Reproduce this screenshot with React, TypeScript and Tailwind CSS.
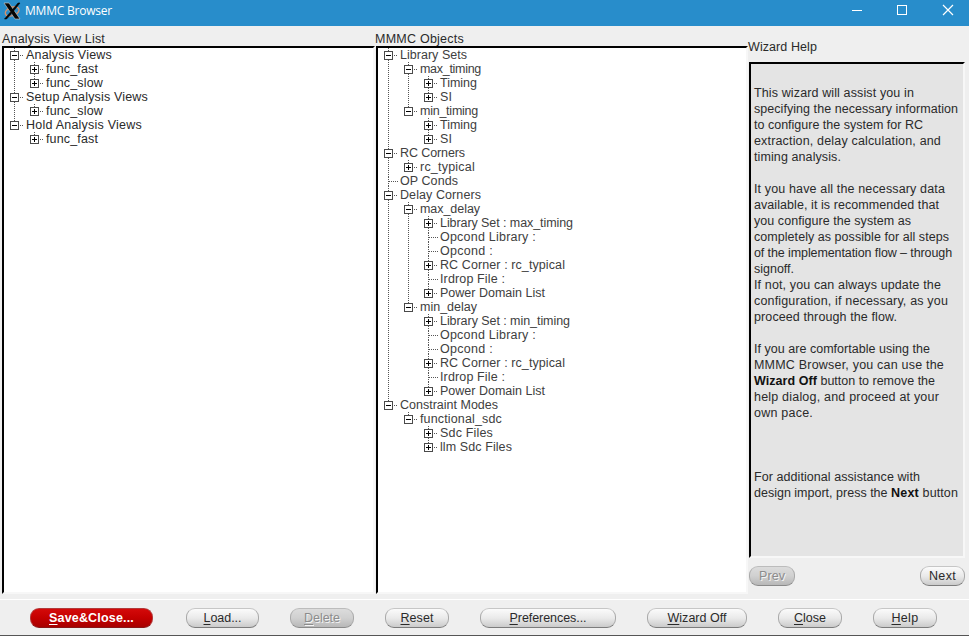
import { useLayoutEffect, useRef, type ReactNode } from "react";
import clsx from "clsx";

/** Text run tracked so that it fills exactly `w` pixels. */
function Run({ w, className, children }: { w: number; className?: string; children: ReactNode }) {
  const ref = useRef<HTMLSpanElement>(null);
  useLayoutEffect(() => {
    const el = ref.current;
    if (!el) return;
    el.style.letterSpacing = "0px";
    const natural = el.getBoundingClientRect().width;
    const count = (el.textContent ?? "").length;
    el.style.letterSpacing = `${(w - natural) / count}px`;
  }, [w]);
  return (
    <span ref={ref} className={clsx("inline-block whitespace-pre", className)}>
      {children}
    </span>
  );
}

type TreeNode = { label: string; w: number; kind?: "open" | "closed" | "leaf"; children?: TreeNode[] };

const analysis: TreeNode[] = [
  { label: "Analysis Views", w: 86, children: [{ label: "func_fast", w: 52 }, { label: "func_slow", w: 57 }] },
  { label: "Setup Analysis Views", w: 122, children: [{ label: "func_slow", w: 57 }] },
  { label: "Hold Analysis Views", w: 116, children: [{ label: "func_fast", w: 52 }] },
];

const timing: TreeNode[] = [{ label: "Timing", w: 37 }, { label: "SI", w: 12 }];

const delay = (set: string, w: number): TreeNode[] => [
  { label: `Library Set : ${set}`, w },
  { label: "Opcond Library :", w: 96, kind: "leaf" },
  { label: "Opcond :", w: 53, kind: "leaf" },
  { label: "RC Corner : rc_typical", w: 125 },
  { label: "Irdrop File :", w: 65, kind: "leaf" },
  { label: "Power Domain List", w: 105 },
];

const objects: TreeNode[] = [
  {
    label: "Library Sets",
    w: 67,
    children: [
      { label: "max_timing", w: 61, children: timing },
      { label: "min_timing", w: 58, children: timing },
    ],
  },
  { label: "RC Corners", w: 65, children: [{ label: "rc_typical", w: 55 }] },
  { label: "OP Conds", w: 58, kind: "leaf" },
  {
    label: "Delay Corners",
    w: 81,
    children: [
      { label: "max_delay", w: 60, children: delay("max_timing", 133) },
      { label: "min_delay", w: 57, children: delay("min_timing", 130) },
    ],
  },
  {
    label: "Constraint Modes",
    w: 98,
    children: [
      {
        label: "functional_sdc",
        w: 82,
        children: [{ label: "Sdc Files", w: 53 }, { label: "llm Sdc Files", w: 72 }],
      },
    ],
  },
];

const vDots = "w-px bg-[repeating-linear-gradient(to_bottom,#555_0_1px,transparent_1px_2px)]";
const hDots = "h-px bg-[repeating-linear-gradient(to_right,#555_0_1px,transparent_1px_2px)]";

function Toggle({ open }: { open: boolean }) {
  return (
    <svg width="9" height="9" viewBox="0 0 9 9" shapeRendering="crispEdges" className="block shrink-0">
      <rect x="0.5" y="0.5" width="8" height="8" fill="#fff" stroke="#4a4a4a" />
      <path d={open ? "M2 4.5H7" : "M2 4.5H7M4.5 2V7"} stroke="#000" />
    </svg>
  );
}

function Tree({ nodes, className }: { nodes: TreeNode[]; className?: string }) {
  return (
    <ul className={className}>
      {nodes.map((n, i) => {
        const leaf = n.kind === "leaf";
        const last = i === nodes.length - 1;
        return (
          <li key={i} className="flex">
            <div className="flex w-[9px] flex-col items-center">
              <div className={clsx(vDots, "h-[3px] shrink-0")} />
              {leaf ? (
                <div className={clsx(vDots, "h-[9px] shrink-0")} />
              ) : (
                <Toggle open={!!n.children} />
              )}
              {!last && <div className={clsx(vDots, "flex-1")} />}
            </div>
            <div>
              <div className="flex h-[14px] items-center leading-[14px]">
                <div className={clsx(hDots, "mt-px", leaf ? "-ml-[4px] mr-[2px] w-[9px]" : "ml-px mr-[2px] w-[4px]")} />
                <Run w={n.w}>{n.label}</Run>
              </div>
              {n.children && <Tree nodes={n.children} className="ml-[11px]" />}
            </div>
          </li>
        );
      })}
    </ul>
  );
}

type Seg = { t: string; w: number; bold?: boolean };
const helpLines: Seg[][] = [
  [{ t: "This wizard will assist you in", w: 160 }],
  [{ t: "specifying the necessary information", w: 204 }],
  [{ t: "to configure the system for RC", w: 169 }],
  [{ t: "extraction, delay calculation, and", w: 187 }],
  [{ t: "timing analysis.", w: 87 }],
  [],
  [{ t: "It you have all the necessary data", w: 191 }],
  [{ t: "available, it is recommended that", w: 185 }],
  [{ t: "you configure the system as", w: 157 }],
  [{ t: "completely as possible for all steps", w: 195 }],
  [{ t: "of the implementation flow – through", w: 198 }],
  [{ t: "signoff.", w: 40 }],
  [{ t: "If not, you can always update the", w: 187 }],
  [{ t: "configuration, if necessary, as you", w: 194 }],
  [{ t: "proceed through the flow.", w: 143 }],
  [],
  [{ t: "If you are comfortable using the", w: 176 }],
  [{ t: "MMMC Browser, you can use the", w: 190 }],
  [{ t: "Wizard Off", w: 63, bold: true }, { t: " button to remove the", w: 118 }],
  [{ t: "help dialog, and proceed at your", w: 185 }],
  [{ t: "own pace.", w: 59 }],
  [],
  [],
  [],
  [{ t: "For additional assistance with", w: 166 }],
  [{ t: "design import, press the ", w: 137 }, { t: "Next", w: 28, bold: true }, { t: " button", w: 39 }],
];

type BtnProps = { label: string; w: number; size: string; tone?: "normal" | "off" | "danger"; plain?: boolean };

function Btn({ label, w, size, tone = "normal", plain }: BtnProps) {
  return (
    <button
      disabled={tone === "off"}
      className={clsx(
        "flex h-5 shrink-0 items-center justify-center rounded-[9px] border text-[12.5px] leading-[14px]",
        size,
        tone === "danger" &&
          "border-[#b23a3a] border-b-[#8a1515] bg-gradient-to-b from-[#d40a0a] via-[#c40000] to-[#a80000] font-bold text-white",
        tone === "normal" &&
          "border-[#a9a9a9] border-t-[#c6c6c6] border-b-[#7c7c7c] bg-gradient-to-b from-[#fbfbfb] via-[#eaeaea] to-[#cbcbcb] text-[#2a2a2a]",
        tone === "off" &&
          "border-[#a9a9a9] border-t-[#bcbcbc] border-b-[#8a8a8a] bg-gradient-to-b from-[#dcdcdc] via-[#d0d0d0] to-[#b8b8b8] text-[#8c8c8c] [text-shadow:1px_1px_0_#f4f4f4]",
      )}
    >
      <Run w={w}>
        <span className={plain ? "" : "underline decoration-1 underline-offset-2"}>{label[0]}</span>
        {label.slice(1)}
      </Run>
    </button>
  );
}

const sunken = "border-2 border-t-black border-l-black border-r-[#f7f7f7] border-b-[#f7f7f7]";

export default function App() {
  return (
    <div className="flex h-[636px] w-[969px] flex-col overflow-hidden border-b border-[#555] bg-[#efefef] font-['Liberation_Sans',Arial,sans-serif] text-[12.5px] text-[#2a2a2a]">
      <header className="flex h-[26px] shrink-0 bg-[#288dcb] text-white">
        <svg width="18" height="18" viewBox="0 0 18 18" className="mt-[2px] ml-[3px]">
          <ellipse cx="9" cy="9.5" rx="7.2" ry="4.2" fill="none" stroke="#d8906a" strokeWidth="1.4" transform="rotate(-20 9 9)" />
          <path d="M1 1H6L17 17H12Z" fill="#050505" stroke="#d9d4cd" strokeWidth=".6" />
          <path d="M15 1H17L10.4 9.2L9.4 7.8ZM7.5 10L8.7 11.6L3.5 17H1.5Z" fill="#050505" stroke="#050505" strokeWidth=".6" />
        </svg>
        <div className="ml-[4px] h-[22px] font-['Open_Sans','Noto_Sans',sans-serif] text-[12px] leading-[21px]">
          <Run w={87}>MMMC Browser</Run>
        </div>
        <svg width="120" height="22" viewBox="0 0 120 22" className="ml-auto" fill="none" stroke="#fff">
          <path d="M3 10.5H13" shapeRendering="crispEdges" />
          <rect x="48.5" y="5.5" width="9" height="9" shapeRendering="crispEdges" />
          <path d="M94 5L104 15M104 5L94 15" strokeWidth="1.2" />
        </svg>
      </header>

      <main className="flex h-[574px] shrink-0 border-b border-white">
        <section className="ml-[2px] w-[373px] pt-[6px]">
          <h2 className="h-[14px] leading-[14px]">
            <Run w={103}>Analysis View List</Run>
          </h2>
          <div className={clsx("h-[548px] bg-white pl-[6px]", sunken)}>
            <Tree nodes={analysis} />
          </div>
        </section>
        <section className="w-[373px] pt-[6px]">
          <h2 className="h-[14px] leading-[14px]">
            <Run w={89}>MMMC Objects</Run>
          </h2>
          <div className={clsx("ml-px h-[548px] bg-white pl-[6px] text-[#404040]", sunken)}>
            <Tree nodes={objects} />
          </div>
        </section>
        <section className="w-[217px] pt-[14px]">
          <h2 className="h-[14px] leading-[14px]">
            <Run w={69}>Wizard Help</Run>
          </h2>
          <div className={clsx("mt-[8px] ml-px h-[496px] w-[216px] bg-[#e4e4e4] pt-[21px] pl-[3px]", sunken)}>
            {helpLines.map((line, i) => (
              <div key={i} className="flex h-4 leading-4">
                {line.map((s) => (
                  <Run key={s.t} w={s.w} className={s.bold ? "font-bold text-[#111]" : ""}>
                    {s.t}
                  </Run>
                ))}
              </div>
            ))}
          </div>
          <div className="mt-[8px] ml-px flex w-[216px] justify-between">
            <Btn label="Prev" w={26} size="w-[46px]" tone="off" plain />
            <Btn label="Next" w={27} size="w-[45px]" plain />
          </div>
        </section>
      </main>

      <footer className="flex gap-[31px] pt-[8px] pl-[30px]">
        <Btn label="Save&Close..." w={85} size="mr-[2px] w-[123px]" tone="danger" />
        <Btn label="Load..." w={38} size="w-[73px]" />
        <Btn label="Delete" w={36} size="w-[64px]" tone="off" />
        <Btn label="Reset" w={33} size="w-[64px]" />
        <Btn label="Preferences..." w={77} size="w-[136px]" />
        <Btn label="Wizard Off" w={59} size="w-[100px]" />
        <Btn label="Close" w={32} size="w-[64px]" />
        <Btn label="Help" w={27} size="w-[64px]" />
      </footer>
    </div>
  );
}
